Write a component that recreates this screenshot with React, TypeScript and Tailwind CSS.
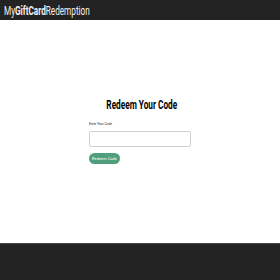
export default function App() {
  return (
    <div className="flex min-h-[280px] flex-col bg-white font-['Roboto',sans-serif]">
      <header className="flex h-[20px] items-center overflow-hidden bg-[#232323] px-[4px] text-[#f2f2f2]">
        <div className="origin-left scale-x-[0.63] whitespace-nowrap text-[13px] leading-none">
          <span>My</span>
          <span className="font-bold">GiftCard</span>
          <span>Redemption</span>
        </div>
      </header>

      <main className="flex flex-1 items-center justify-center">
        <div className="flex w-[102px] flex-col">
          <h1 className="scale-x-[0.66] whitespace-nowrap text-center text-[12.5px] font-bold leading-none text-black">
            Redeem Your Code
          </h1>
          <label className="mt-[11px] origin-left scale-x-[0.8] whitespace-nowrap text-[4px] leading-none text-[#222]">
            Enter Your Code
          </label>
          <input
            type="text"
            className="mt-[5px] h-[16px] w-[102px] rounded-[2px] border border-[#cfcfcf] bg-white"
          />
          <button className="mt-[6px] h-[11px] w-[31px] rounded-full bg-[#4f9f7d] text-[4px] leading-none text-white">
            Redeem Code
          </button>
        </div>
      </main>

      <footer className="h-[37px] border-t border-[#444] bg-[#232323]" />
    </div>
  );
}
